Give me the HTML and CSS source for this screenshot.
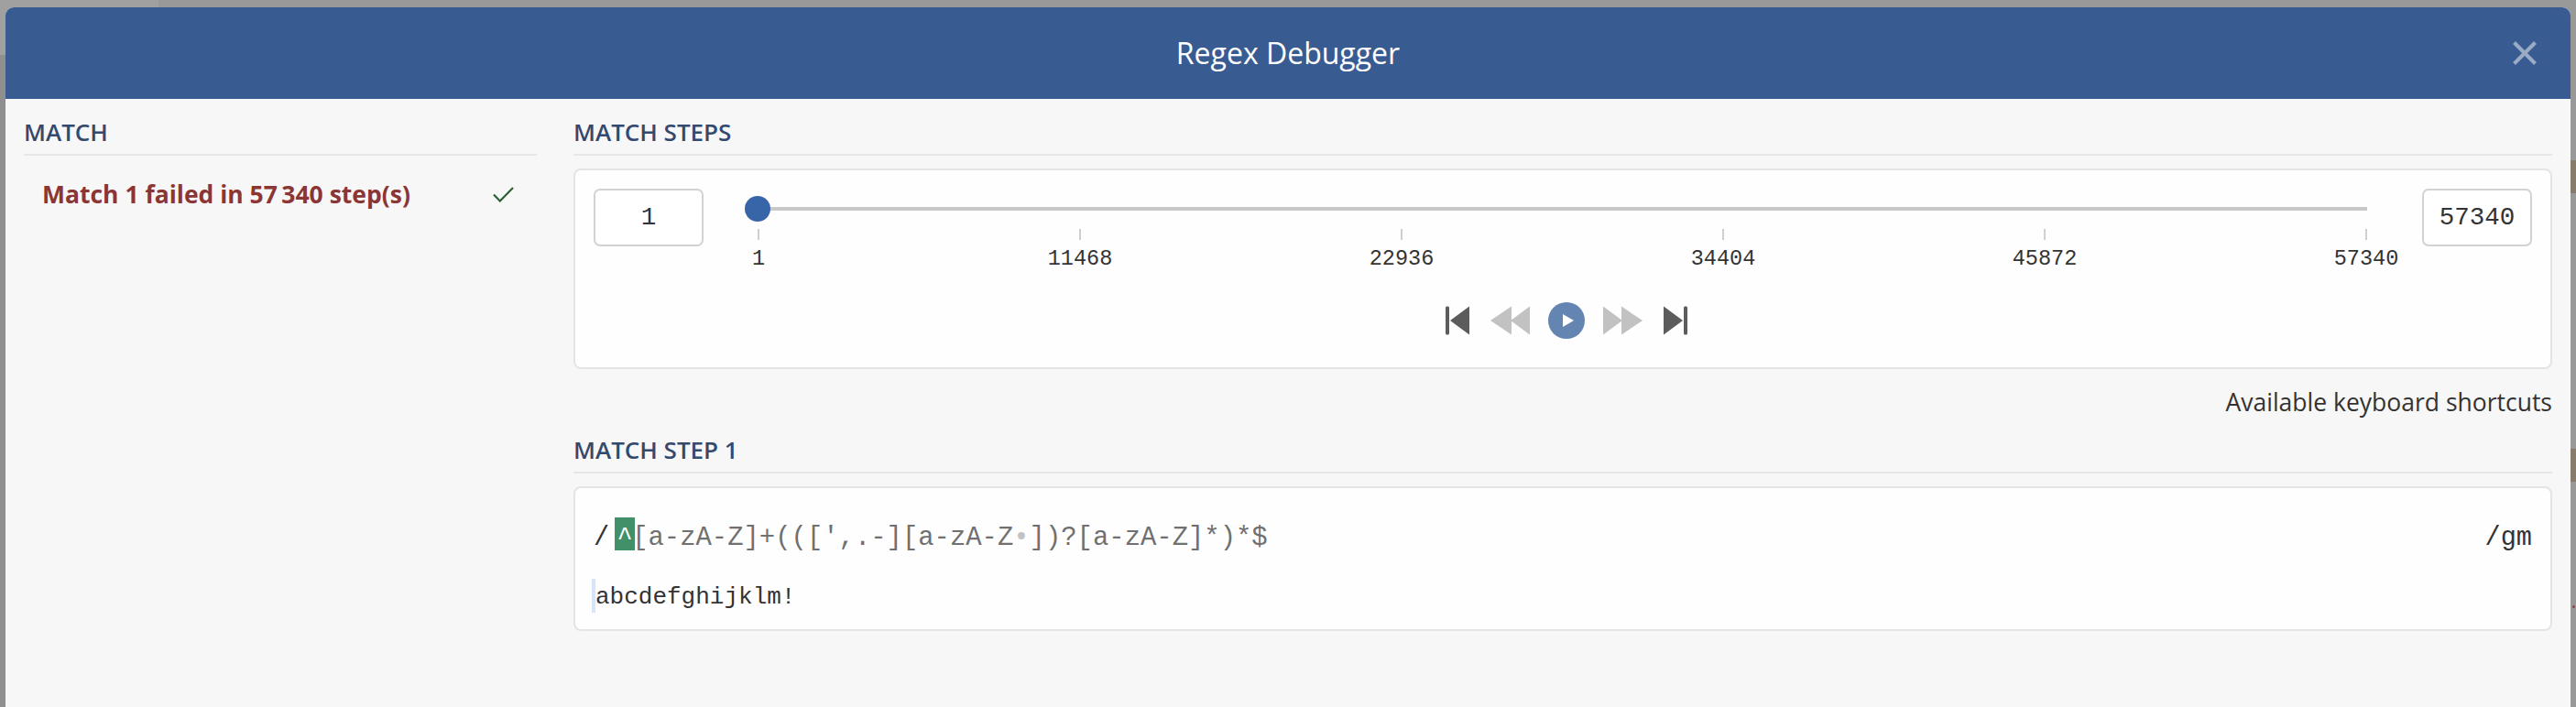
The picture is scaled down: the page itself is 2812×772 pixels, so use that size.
FILE: index.html
```html
<!DOCTYPE html>
<html lang="en">
<head>
<meta charset="utf-8">
<title>Regex Debugger</title>
<link rel="stylesheet" href="styles.css">
</head>
<body>
<div class="backdrop" aria-hidden="true">
  <span class="bd-top"></span>
  <span class="bd-left"></span>
  <span class="bd-tan bd-tan-1"></span>
  <span class="bd-tan bd-tan-2"></span>
  <span class="bd-dot"></span>
</div>
<main class="modal">
  <header class="modal-head">
    <h1 class="modal-title">Regex Debugger</h1>
    <button class="close" aria-label="Close">
      <svg width="26" height="26" viewBox="0 0 26 26"><path d="M1.500 1.500 24.500 24.500M24.500 1.500 1.500 24.500" fill="none" stroke="#9aabc6" stroke-width="4"/></svg>
    </button>
  </header>
  <div class="modal-body">
    <aside class="side">
      <h2 class="section-head">MATCH</h2>
      <div class="match-row">
        <span class="match-text">Match 1 failed in 57&#8201;340 step(s)</span>
        <svg class="check" width="23" height="17" viewBox="0 0 23 17"><path d="M1 8.500 7.800 15.500 22 1" fill="none" stroke="#2f5f35" stroke-width="2.200"/></svg>
      </div>
    </aside>
    <section class="content">
      <h2 class="section-head">MATCH STEPS</h2>
      <div class="panel steps">
        <div class="slider-row">
          <div class="num-input small">1</div>
          <div class="slider">
            <div class="track"><span class="handle"></span></div>
            <div class="ticks">
              <div class="tick"><i></i><span>1</span></div>
              <div class="tick"><i></i><span>11468</span></div>
              <div class="tick"><i></i><span>22936</span></div>
              <div class="tick"><i></i><span>34404</span></div>
              <div class="tick"><i></i><span>45872</span></div>
              <div class="tick"><i></i><span>57340</span></div>
            </div>
          </div>
          <div class="num-input">57340</div>
        </div>
        <div class="controls">
          <svg width="29" height="32" viewBox="0 0 29 32"><rect x="0" y="0.500" width="4" height="31" rx="1.500" fill="#5c5c5c"/><path d="M26 .5V31.500L5 16Z" fill="#5c5c5c"/></svg>
          <svg width="43" height="32" viewBox="0 0 43 32"><path d="M23 .5V31.500L0 16ZM43 .5V31.500L22 16Z" fill="#c2c2c2"/></svg>
          <svg width="40" height="40" viewBox="0 0 40 40"><circle cx="20" cy="20" r="20" fill="#6484b2"/><path d="M16 13V27L28 20Z" fill="#fff"/></svg>
          <svg width="43" height="32" viewBox="0 0 43 32"><path d="M20 .5V31.500L43 16ZM0 .5V31.500L21 16Z" fill="#c2c2c2"/></svg>
          <svg width="29" height="32" viewBox="0 0 29 32"><rect x="25" y="0.500" width="4" height="31" rx="1.500" fill="#5c5c5c"/><path d="M3 .5V31.500L24 16Z" fill="#5c5c5c"/></svg>
        </div>
      </div>
      <div class="shortcuts">Available keyboard shortcuts</div>
      <h2 class="section-head">MATCH STEP 1</h2>
      <div class="panel step">
        <div class="regex-row">
          <div class="regex"><span class="slash">/</span><span class="hit">^</span><span class="pattern">[a-zA-Z]+(([',.-][a-zA-Z<span class="space">&#8226;</span>])?[a-zA-Z]*)*$</span></div>
          <div class="flags">/gm</div>
        </div>
        <div class="subject"><span class="caret"></span><span class="subject-text">abcdefghijklm!</span></div>
      </div>
    </section>
  </div>
</main>
</body>
</html>
```
FILE: styles.css
```css
* { box-sizing: border-box; }
html, body { margin: 0; height: 772px; overflow: hidden; }
body { background: #999; font-family: "Open Sans", "Liberation Sans", sans-serif; color: #333; position: relative; }

.backdrop { position: absolute; inset: 0; overflow: hidden; }
.backdrop span { position: absolute; }
.bd-top { left: 0; top: 0; width: 173px; height: 60px; background: #a0a0a0; }
.bd-left { left: 0; top: 60px; width: 6px; height: 712px; background: #8f8f8f; }
.bd-tan { left: 2806px; width: 6px; height: 36px; background: #877b6b; }
.bd-tan-1 { top: 175px; }
.bd-tan-2 { top: 490px; }
.bd-dot { left: 2808px; top: 661px; width: 3px; height: 3px; border-radius: 50%; background: #8a4a4a; }

.modal { position: relative; margin: 8px 6px 0; height: 764px; background: #f7f7f7; border-radius: 9px 9px 0 0; overflow: hidden; }
.modal-head { height: 100px; background: #385c92; display: flex; align-items: center; justify-content: center; position: relative; }
.modal-title { margin: 0; font-size: 32px; font-weight: 500; color: #fff; line-height: 40px; }
.close { position: absolute; right: 37px; top: 37px; width: 26px; height: 26px; padding: 0; border: 0; background: none; display: block; }
.close svg { display: block; }

.modal-body { display: flex; gap: 40px; padding: 18px 20px 0; }
.side { width: 560px; flex: none; }
.content { flex: 1; min-width: 0; }

.section-head { margin: 0 0 14px; height: 44px; line-height: 36px; font-size: 26px; font-weight: 600; color: #34496e; border-bottom: 2px solid #e6e6e6; }

.match-row { display: flex; align-items: center; justify-content: space-between; height: 36px; margin-top: 24px; padding: 0 25px 0 20px; }
.match-text { font-size: 26.500px; font-weight: 700; color: #8b3535; }
.check { display: block; }

.panel { background: #fefefe; border: 2px solid #e4e4e4; border-radius: 8px; }
.steps { height: 219px; padding: 20px 20px 0; }
.slider-row { display: flex; align-items: flex-start; height: 90px; }
.num-input { width: 120px; height: 63px; flex: none; background: #fff; border: 2px solid #d2d2d2; border-radius: 7px; display: flex; align-items: center; justify-content: center; font-family: "Liberation Mono", monospace; font-size: 27.500px; color: #333; }
.slider { flex: 1; min-width: 0; margin: 20px 60px 0 59px; }
.track { position: relative; height: 4px; background: #c8c8c8; }
.handle { position: absolute; left: -14px; top: -12px; width: 28px; height: 28px; border-radius: 50%; background: #3865a8; }
.ticks { display: flex; justify-content: space-between; margin-top: 20px; }
.tick { width: 2px; display: flex; flex-direction: column; align-items: center; }
.tick i { display: block; width: 2px; height: 12px; background: #cfcfcf; flex: none; }
.tick span { margin-top: 7px; font-family: "Liberation Mono", monospace; font-size: 23.500px; line-height: 28px; color: #333; }

.controls { display: flex; align-items: center; justify-content: center; gap: 20px; height: 40px; margin-top: 34px; padding-left: 8px; }
.controls svg { display: block; flex: none; }

.shortcuts { margin: 18px 0 16px; font-size: 26.500px; line-height: 36px; text-align: right; color: #333; }

.step { height: 158px; padding: 32px 20px 0; font-family: "Liberation Mono", monospace; }
.regex-row { display: flex; justify-content: space-between; align-items: flex-start; height: 36px; line-height: 46px; font-size: 28.600px; }
.regex { height: 36px; color: #707070; white-space: nowrap; display: flex; align-items: flex-start; }
.slash { color: #333; margin-right: 6px; }
.hit { background: #42906a; color: #fff; width: 22px; height: 36px; text-align: center; }
.pattern { margin-left: -3px; font-size: 28.900px; }
.space { color: #c2c2c2; }
.flags { height: 36px; color: #333; }
.subject { display: flex; align-items: center; height: 37px; margin: 31px 0 0 -2px; font-size: 26px; color: #333; }
.subject-text { padding-top: 3px; }
.caret { width: 4px; height: 37px; background: #d6e6f8; flex: none; }
```
